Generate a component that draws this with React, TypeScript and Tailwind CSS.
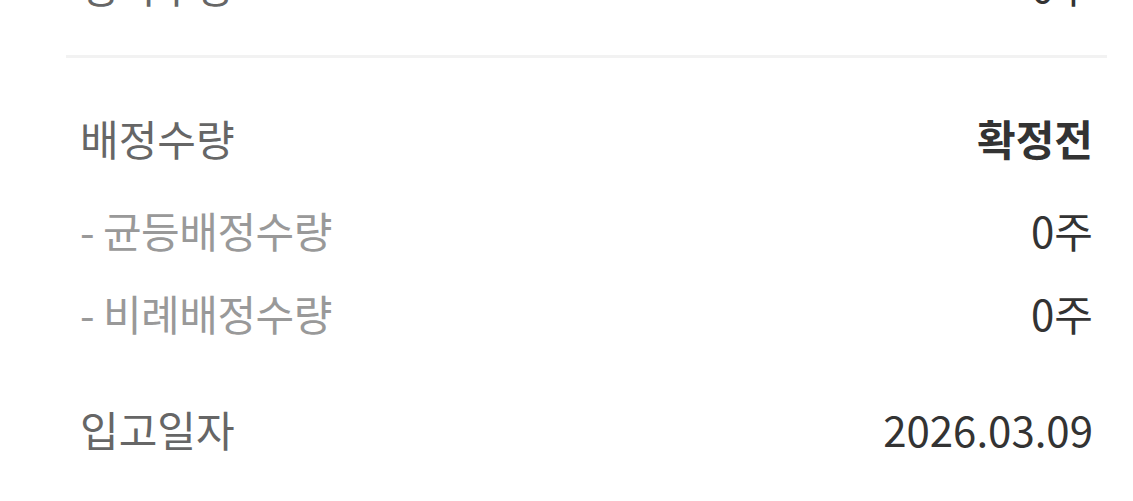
import React from "react";

const font = { fontFamily: '"Noto Sans CJK KR", "Noto Sans", sans-serif' };

export default function App() {
  return (
    <div className="w-[1133px] h-[501px] bg-white overflow-hidden" style={font}>
      <div className="-mt-[36px] pl-[80px] pr-[40px] h-[42px] flex items-center justify-between text-[42px] leading-none">
        <span className="text-[#666666]">청약수량</span>
        <span className="text-[#333333]">0주</span>
      </div>
      <div className="mt-[49px] ml-[66px] mr-[26px] h-[3px] bg-[#f2f2f2]" />
      <div className="pl-[80px] pr-[40px] pt-[59px] flex flex-col">
        <div className="flex items-center justify-between h-[42px] text-[42px] leading-none">
          <span className="text-[#666666]">배정수량</span>
          <span className="text-[#333333] font-bold">확정전</span>
        </div>
        <div className="mt-[50px] flex items-center justify-between h-[42px] text-[42px] leading-none">
          <span className="text-[#999999] tracking-[-0.5px]">- 균등배정수량</span>
          <span className="text-[#333333]">0주</span>
        </div>
        <div className="mt-[41px] flex items-center justify-between h-[42px] text-[42px] leading-none">
          <span className="text-[#999999] tracking-[-0.5px]">- 비례배정수량</span>
          <span className="text-[#333333]">0주</span>
        </div>
        <div className="mt-[74px] flex items-center justify-between h-[42px] text-[42px] leading-none">
          <span className="text-[#666666]">입고일자</span>
          <span className="text-[#333333]">2026.03.09</span>
        </div>
      </div>
    </div>
  );
}
